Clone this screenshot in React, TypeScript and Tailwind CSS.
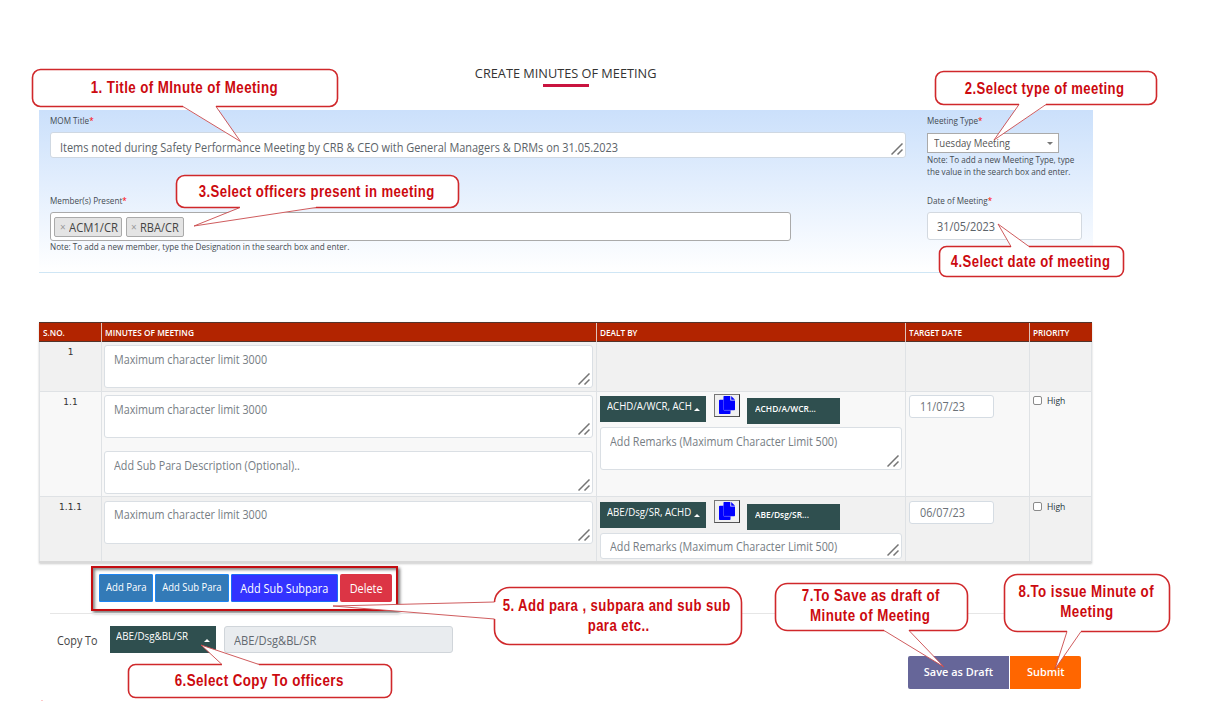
import type { ReactNode } from "react";

function T({ children, className = "" }: { children: ReactNode; className?: string }) {
  return <span className={`inline-block origin-left whitespace-nowrap ${className}`}>{children}</span>;
}

function Grip() {
  return (
    <svg className="absolute right-[2px] bottom-[2px] h-[12px] w-[12px]" viewBox="0 0 12 12" fill="none" stroke="#757575" strokeWidth="1.5">
      <path d="M0.5 11.5L11.5 0.5M6.5 11.5L11.5 6.5" />
    </svg>
  );
}

function Area({ text, className = "" }: { text: string; className?: string }) {
  return (
    <div className={`relative rounded-[3px] border border-[#dadfe4] bg-white pl-[9px] text-[12px] leading-[18px] text-[#767d84] ${className}`}>
      <T className="scale-x-[0.897]">{text}</T>
      <Grip />
    </div>
  );
}

function Field({ text, star = false }: { text: string; star?: boolean }) {
  return (
    <div className="h-[12px] text-[9px] leading-[12px] text-[#444b52]">
      <T className="scale-x-[0.905]">
        {text}
        {star && <span className="text-[#ff0000]">*</span>}
      </T>
    </div>
  );
}

function UpArrow({ className = "" }: { className?: string }) {
  return (
    <svg className={`h-[3px] w-[6px] ${className}`} viewBox="0 0 6 3">
      <path d="M0 3L3 0L6 3Z" fill="#fff" />
    </svg>
  );
}

function CopyIcon() {
  return (
    <svg className="h-[18px] w-[16px]" viewBox="0 0 16 18">
      <path d="M1 3.800H5V14.300H11.500V17.200Q11.500 18 10.700 18H0.800Q0 18 0 17.200V4.600Q0 3.800 1 3.800Z" fill="#0000ff" />
      <path d="M5 0H11.300V4.500H16V13.400Q16 14.200 15.200 14.200H5.300Q4.500 14.200 4.500 13.400V0.800Q4.500 0 5 0Z" fill="#0000ff" />
      <path d="M12.200 0L16 3.700H12.200Z" fill="#0000ff" />
      <path d="M4.500 3.500V13.600Q4.500 14.300 5.300 14.300H11.500" fill="none" stroke="#6868ff" strokeWidth="0.6" />
    </svg>
  );
}

function Dealt({ chosen, short }: { chosen: string; short: string }) {
  return (
    <div className="flex h-[30px] items-start">
      <div className="mt-[2px] flex h-[26px] w-[106px] justify-between bg-[#2f4f4f] pr-[6px] pl-[7px] text-[10.5px] leading-[20px] text-white">
        <div className="w-[86px] overflow-hidden">
          <T className="scale-x-[0.92]">{chosen}</T>
        </div>
        <UpArrow className="mt-[12px] -ml-[2px] shrink-0" />
      </div>
      <div className="ml-[8px] flex h-[23px] w-[26px] justify-center border border-t-[#777] border-r-[#333] border-b-[#555] border-l-[#777] bg-[#f0f0f0] pt-[1px]">
        <CopyIcon />
      </div>
      <div className="mt-[4px] ml-[7px] h-[26px] w-[93px] bg-[#2f4f4f] pl-[8px] text-[9px] leading-[21px] font-semibold text-white">
        <T className="scale-x-[0.93]">{short}</T>
      </div>
    </div>
  );
}

function DateBox({ text }: { text: string }) {
  return (
    <div className="h-[23px] w-[85px] rounded-[3px] border border-[#d5dce3] bg-white pl-[10px] text-[12px] leading-[22px] text-[#6b7177]">
      <T className="scale-x-[0.9]">{text}</T>
    </div>
  );
}

function High() {
  return (
    <div className="flex text-[9px] leading-[12px] text-[#26343c]">
      <span className="mt-[1px] mr-[5px] h-[9px] w-[9px] rounded-[2px] border border-[#8a8a8a] bg-white" />
      <T className="scale-x-[0.95]">High</T>
    </div>
  );
}

const cell = "border-l border-[#dfe2e5]";

function Row({ no, className, children }: { no: string; className: string; children: ReactNode }) {
  return (
    <div className={`grid grid-cols-[62px_495px_309px_124px_63px] border-r border-b border-[#dfe2e5] ${className}`}>
      <div className={`${cell} pt-[4px] text-center font-['DejaVu_Sans','Noto_Sans',sans-serif] text-[9px] leading-[12px] text-[#333]`}>{no}</div>
      {children}
    </div>
  );
}

type CalloutProps = { className: string; w: number; h: number; r: number; tail: string; fill: string; children: ReactNode };

function Callout({ className, w, h, r, tail, fill, children }: CalloutProps) {
  return (
    <div className={`absolute flex flex-col items-center justify-center text-center font-['Liberation_Sans',Arial,sans-serif] text-[16px] leading-[20px] font-bold tracking-[0.5px] text-[#cc0a0f] ${className}`}>
      <svg className="absolute inset-0 h-full w-full overflow-visible" viewBox={`0 0 ${w} ${h}`}>
        <rect x="0.5" y="0.5" width={w - 1} height={h - 1} rx={r} fill="#fff" stroke="#d0282b" strokeWidth="1.6" />
        <path d={fill} fill="#fff" />
        <path d={tail} fill="none" stroke="#c94a4c" strokeWidth="0.9" />
      </svg>
      {children}
    </div>
  );
}

function Say({ children, className }: { children: ReactNode; className: string }) {
  return <span className={`relative block whitespace-nowrap ${className}`}>{children}</span>;
}

export default function App() {
  return (
    <div className="relative h-[716px] w-[1206px] overflow-hidden bg-white font-['Open_Sans','Noto_Sans',sans-serif]">
      <div className="flex h-full flex-col pt-[64px] pl-[39px]">
        <header className="flex h-[46px] w-[1054px] flex-col items-center">
          <h1 className="text-[13px] leading-[18px] font-medium whitespace-nowrap text-[#333]">
            <span className="inline-block scale-x-[0.98]">CREATE MINUTES OF MEETING</span>
          </h1>
          <div className="mt-[2px] h-[3px] w-[46px] bg-[#c9143f]" />
        </header>

        <section className="flex h-[163px] w-[1054px] justify-between border-b border-[#cfe6f5] bg-linear-to-b from-[#cbe0fb] to-white pt-[5px] pr-[11px] pl-[11px]">
          <div className="w-[856px]">
            <Field text="MOM Title" star />
            <div className="relative mt-[5px] h-[26px] rounded-[3px] border border-[#cfd8e2] bg-white pl-[9px] text-[12px] leading-[29px] text-[#5c6369]">
              <T className="scale-x-[0.912]">Items noted during Safety Performance Meeting by CRB &amp; CEO with General Managers &amp; DRMs on 31.05.2023</T>
              <Grip />
            </div>
            <div className="mt-[37px]">
              <Field text="Member(s) Present" star />
            </div>
            <div className="mt-[5px] flex h-[29px] w-[741px] gap-[4px] rounded-[3px] border border-[#aaa] bg-white pt-[4px] pl-[3px] text-[12px] leading-[19px] text-[#444]">
              <div className="flex h-[20px] w-[68px] rounded-[2px] border border-[#aaa] bg-[#e4e4e4] pl-[5px]">
                <span className="w-[9px] text-[10px] text-[#999]">×</span>
                <T className="scale-x-[0.94]">ACM1/CR</T>
              </div>
              <div className="flex h-[20px] w-[58px] rounded-[2px] border border-[#aaa] bg-[#e4e4e4] pl-[4px]">
                <span className="w-[9px] text-[10px] text-[#999]">×</span>
                <T className="scale-x-[0.92]">RBA/CR</T>
              </div>
            </div>
            <div>
              <Field text="Note: To add a new member, type the Designation in the search box and enter." />
            </div>
          </div>
          <div className="w-[155px]">
            <Field text="Meeting Type" star />
            <div className="mt-[6px] mb-px flex h-[20px] w-[132px] items-center justify-between border border-[#aaa] bg-white pr-[5px] pl-[6px] text-[11px] text-[#555]">
              <T className="scale-x-[0.873]">Tuesday Meeting</T>
              <svg className="h-[3px] w-[6px] shrink-0" viewBox="0 0 6 3">
                <path d="M0 0H6L3 3Z" fill="#777" />
              </svg>
            </div>
            <Field text="Note: To add a new Meeting Type, type" />
            <Field text="the value in the search box and enter." />
            <div className="mt-[17px]">
              <Field text="Date of Meeting" star />
            </div>
            <div className="mt-[5px] h-[28px] rounded-[3px] border border-[#d3d9e0] bg-white pl-[9px] text-[12px] leading-[28px] text-[#5c6369]">
              <T className="scale-x-[0.912]">31/05/2023</T>
            </div>
          </div>
        </section>

        <section className="mt-[49px] w-[1053px] shadow-[0_1px_2px_#ccc]">
          <div className="grid h-[20px] grid-cols-[62px_495px_309px_124px_63px] border-y border-[#52342c] bg-[#b22400] text-[9px] leading-[19px] font-semibold text-white">
            <div className="pl-[4px]"><T className="scale-x-[0.91]">S.NO.</T></div>
            <div className="border-l border-[#dfc3bb] pl-[3px]"><T className="scale-x-[0.925]">MINUTES OF MEETING</T></div>
            <div className="border-l border-[#dfc3bb] pl-[3px]"><T className="scale-x-[0.91]">DEALT BY</T></div>
            <div className="border-l border-[#dfc3bb] pl-[3px]"><T className="scale-x-[0.91]">TARGET DATE</T></div>
            <div className="border-l border-[#dfc3bb] pl-[3px]"><T className="scale-x-[0.91]">PRIORITY</T></div>
          </div>
          <Row no="1" className="h-[50px] bg-[#f1f1f1]">
            <div className={`${cell} pt-[3px] pr-[3px] pl-[2px]`}>
              <Area text="Maximum character limit 3000" className="h-[43px] pt-[5px]" />
            </div>
            <div className={cell} />
            <div className={cell} />
            <div className={cell} />
          </Row>
          <Row no="1.1" className="h-[105px] bg-[#f8f8f8]">
            <div className={`${cell} flex flex-col gap-[13px] pt-[3px] pr-[3px] pl-[2px]`}>
              <Area text="Maximum character limit 3000" className="h-[43px] pt-[5px]" />
              <Area text="Add Sub Para Description (Optional).." className="h-[43px] pt-[5px]" />
            </div>
            <div className={`${cell} pt-[2px] pr-[3px] pl-[3px]`}>
              <Dealt chosen="ACHD/A/WCR, ACH" short="ACHD/A/WCR..." />
              <Area text="Add Remarks (Maximum Character Limit 500)" className="mt-[3px] h-[43px] pt-[5px]" />
            </div>
            <div className={`${cell} pt-[3px] pl-[3px]`}><DateBox text="11/07/23" /></div>
            <div className={`${cell} pt-[3px] pl-[3px]`}><High /></div>
          </Row>
          <Row no="1.1.1" className="h-[66px] border-b-2 border-b-[#d9d9d9] bg-[#f1f1f1]">
            <div className={`${cell} pt-[4px] pr-[3px] pl-[2px]`}>
              <Area text="Maximum character limit 3000" className="h-[43px] pt-[4px]" />
            </div>
            <div className={`${cell} pt-[3px] pr-[3px] pl-[3px]`}>
              <Dealt chosen="ABE/Dsg/SR, ACHD" short="ABE/Dsg/SR..." />
              <Area text="Add Remarks (Maximum Character Limit 500)" className="mt-[3px] h-[26px] pt-[4px]" />
            </div>
            <div className={`${cell} pt-[4px] pl-[3px]`}><DateBox text="06/07/23" /></div>
            <div className={`${cell} pt-[4px] pl-[3px]`}><High /></div>
          </Row>
        </section>

        <div className="mt-[3px] ml-[52px] flex h-[45px] w-[307px] gap-[2px] border-2 border-[#c40d12] pt-[6px] pl-[6px] text-white shadow-[2px_2px_3px_#777,inset_2px_2px_3px_#888]">
          <div className="h-[28px] w-[54px] rounded-[1px] border border-[#1c84f2] bg-[#337ab7] text-center text-[10.5px] leading-[24px]">
            <span className="inline-block scale-x-[0.91] whitespace-nowrap">Add Para</span>
          </div>
          <div className="h-[28px] w-[74px] rounded-[1px] border border-[#1c84f2] bg-[#337ab7] text-center text-[10.5px] leading-[24px]">
            <span className="inline-block scale-x-[0.9] whitespace-nowrap">Add Sub Para</span>
          </div>
          <div className="h-[28px] w-[107px] rounded-[1px] border border-[#1c6cf5] bg-[#3333ff] text-center text-[12px] leading-[27px]">
            <span className="inline-block scale-x-[0.91] whitespace-nowrap">Add Sub Subpara</span>
          </div>
          <div className="h-[28px] w-[52px] rounded-[2px] bg-[#dc3545] text-center text-[12px] leading-[29px]">
            <span className="inline-block scale-x-[0.91] whitespace-nowrap">Delete</span>
          </div>
        </div>

        <div className="mt-[2px] ml-[11px] h-px w-[1031px] bg-[#e6e6e6]" />

        <div className="mt-[12px] flex h-[27px] pl-[18px]">
          <div className="w-[53px] text-[12px] leading-[29px] text-[#444]"><T className="scale-x-[0.9]">Copy To</T></div>
          <div className="flex w-[106px] justify-between bg-[#2f4f4f] pr-[6px] pl-[6px] text-[10.5px] leading-[20px] text-white">
            <T className="scale-x-[0.93]">ABE/Dsg&amp;BL/SR</T>
            <UpArrow className="mt-[13px] shrink-0" />
          </div>
          <div className="ml-[8px] w-[229px] rounded-[3px] border border-[#d0d5da] bg-[#e9ecef] pl-[9px] text-[12px] leading-[28px] text-[#63696f]">
            <T className="scale-x-[0.93]">ABE/Dsg&amp;BL/SR</T>
          </div>
        </div>

        <div className="mt-[3px] ml-[869px] flex h-[33px] gap-px text-center text-[11.5px] leading-[32px] font-semibold text-white">
          <div className="w-[101px] rounded-l-[2px] bg-[#666699]">
            <span className="inline-block scale-x-[0.95] whitespace-nowrap">Save as Draft</span>
          </div>
          <div className="w-[71px] rounded-r-[2px] bg-[#ff6600]">
            <span className="inline-block scale-x-[0.95] whitespace-nowrap">Submit</span>
          </div>
        </div>
        <div className="mt-[11px] ml-[2px] h-px w-[2px] bg-[#ffc9c9]" />
      </div>

      <Callout className="top-[69px] left-[32px] h-[38px] w-[306px]" w={306} h={38} r={8} fill="M151 35L184 35L184 38L208.500 72.500L151 38Z" tail="M151 37.500L208.500 72.500L184 37.500">
        <Say className="left-[-1px] scale-x-[0.833]">1. Title of MInute of Meeting</Say>
      </Callout>
      <Callout className="top-[71px] left-[935px] h-[34px] w-[222px]" w={222} h={34} r={8} fill="M84 31L111 31L111 34L59 69L84 34Z" tail="M84 33.500L59 69L111 33.500">
        <Say className="left-[-1px] top-px scale-x-[0.817]">2.Select type of meeting</Say>
      </Callout>
      <Callout className="top-[175px] left-[176px] h-[33px] w-[283px]" w={283} h={33} r={8} fill="M64 30L140 30L140 33L18 51L64 33Z" tail="M64 32.500L18 51L140 32.500">
        <Say className="left-[-0.5px] scale-x-[0.821]">3.Select officers present in meeting</Say>
      </Callout>
      <Callout className="top-[246px] left-[939px] h-[31px] w-[185px]" w={185} h={31} r={7} fill="M72 3L90 3L90 0L59 -22L72 0Z" tail="M72 0.500L59 -22L90 0.500">
        <Say className="left-[-1px] scale-x-[0.817]">4.Select date of meeting</Say>
      </Callout>
      <Callout className="top-[587px] left-[494px] h-[58px] w-[248px]" w={248} h={58} r={15} fill="M3 15L3 32L0 32L-161 19L0 15Z" tail="M0.500 15L-161 19L0.500 32">
        <Say className="left-[-1px] scale-x-[0.822]">5. Add para , subpara and sub sub</Say>
        <Say className="left-px scale-x-[0.822]">para etc..</Say>
      </Callout>
      <Callout className="top-[664px] left-[128px] h-[34px] w-[264px]" w={264} h={34} r={7} fill="M94 3L131 3L131 0L73 -19L94 0Z" tail="M94 0.500L73 -19L131 0.500">
        <Say className="left-[-0.5px] scale-x-[0.835]">6.Select Copy To officers</Say>
      </Callout>
      <Callout className="top-[583px] left-[775px] h-[48px] w-[193px]" w={193} h={48} r={12} fill="M109 45L134 45L134 48L169 84L109 48Z" tail="M109 47.500L169 84L134 47.500">
        <Say className="top-[-1px] left-[-1px] scale-x-[0.833]">7.To Save as draft of</Say>
        <Say className="top-[-1px] left-[-1px] scale-x-[0.833]">Minute of Meeting</Say>
      </Callout>
      <Callout className="top-[574px] left-[1004px] h-[58px] w-[166px]" w={166} h={58} r={13} fill="M63 55L77 55L77 58L51 95L63 58Z" tail="M63 57.500L51 95L77 57.500">
        <Say className="top-[-1px] left-[-1px] scale-x-[0.833]">8.To issue Minute of</Say>
        <Say className="top-[-1px] scale-x-[0.833]">Meeting</Say>
      </Callout>
    </div>
  );
}
